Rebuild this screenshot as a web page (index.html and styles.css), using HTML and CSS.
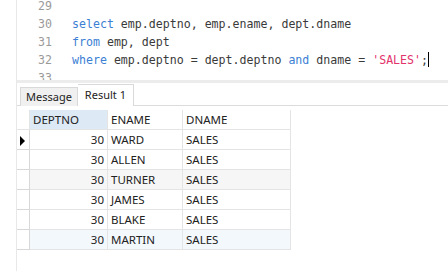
FILE: index.html
```html
<!DOCTYPE html>
<html lang="en">
<head>
    <meta charset="UTF-8">
    <title>Query Result</title>
    <link rel="stylesheet" href="styles.css">
</head>
<body>
    <div class="workspace">
        <div class="editor">
            <div class="lines">
                <div class="line"><span class="num">29</span><span class="code"></span></div>
                <div class="line"><span class="num">30</span><span class="code"><span class="kw">select</span> emp.deptno, emp.ename, dept.dname</span></div>
                <div class="line"><span class="num">31</span><span class="code"><span class="kw">from</span> emp, dept</span></div>
                <div class="line"><span class="num">32</span><span class="code"><span class="kw">where</span> emp.deptno = dept.deptno <span class="kw">and</span> dname = <span class="str">'SALES'</span>;<span class="caret"></span></span></div>
                <div class="line"><span class="num">33</span><span class="code"></span></div>
            </div>
        </div>

        <div class="tabs">
            <div class="tab">Message</div>
            <div class="tab active">Result 1</div>
        </div>

        <table class="grid">
            <thead>
                <tr>
                    <th class="ind"></th>
                    <th class="col-no sorted">DEPTNO</th>
                    <th class="col-name">ENAME</th>
                    <th class="col-dept">DNAME</th>
                </tr>
            </thead>
            <tbody>
                <tr class="current">
                    <td class="ind"><span class="arrow"></span></td>
                    <td class="num-cell">30</td><td>WARD</td><td>SALES</td>
                </tr>
                <tr>
                    <td class="ind"></td>
                    <td class="num-cell">30</td><td>ALLEN</td><td>SALES</td>
                </tr>
                <tr class="alt">
                    <td class="ind"></td>
                    <td class="num-cell">30</td><td>TURNER</td><td>SALES</td>
                </tr>
                <tr>
                    <td class="ind"></td>
                    <td class="num-cell">30</td><td>JAMES</td><td>SALES</td>
                </tr>
                <tr>
                    <td class="ind"></td>
                    <td class="num-cell">30</td><td>BLAKE</td><td>SALES</td>
                </tr>
                <tr class="hover">
                    <td class="ind"></td>
                    <td class="num-cell">30</td><td>MARTIN</td><td>SALES</td>
                </tr>
            </tbody>
        </table>
    </div>
</body>
</html>
```

FILE: styles.css
```css
body {
    margin: 0;
    width: 448px;
    height: 271px;
    overflow: hidden;
    background: #ffffff;
}
.workspace {
    margin-left: 16px;
    height: 271px;
    border-left: 1px solid #e8e8e8;
}
.editor {
    height: 80px;
    overflow: hidden;
    background: #ffffff;
    border-bottom: 3px solid #ececec;
    font-family: "DejaVu Sans Mono", monospace;
    font-size: 11.6px;
}
.lines {
    margin-top: -3px;
}
.line {
    display: flex;
    height: 18px;
    line-height: 18px;
}
.num {
    width: 35px;
    text-align: right;
    color: #9a9a9a;
}
.code {
    margin-left: 20px;
    color: #3a3a3a;
    white-space: pre;
}
.kw {
    color: #3b80d4;
}
.str {
    color: #e2336b;
}
.caret {
    display: inline-block;
    width: 1px;
    height: 15px;
    background: #000;
    vertical-align: -3px;
}
.tabs {
    display: flex;
    align-items: flex-end;
    height: 22px;
    padding-left: 3px;
    border-bottom: 1px solid #dcdcdc;
    font-family: "Noto Sans", sans-serif;
    font-size: 11px;
    color: #222;
}
.tab {
    height: 18px;
    line-height: 18px;
    padding: 0 5px;
    margin-bottom: -1px;
    background: #f0f0f0;
    border: 1px solid #d9d9d9;
    border-bottom: none;
}
.tab.active {
    height: 21px;
    line-height: 20px;
    padding: 0 7px;
    background: #ffffff;
    border-left: none;
}
.grid {
    margin-top: 4px;
    border-collapse: collapse;
    font-family: "Noto Sans", sans-serif;
    font-size: 11.5px;
    color: #222;
}
.grid th,
.grid td {
    height: 19px;
    padding: 0 3px;
    border: 1px solid #e4e4e4;
    text-align: left;
    font-weight: normal;
    white-space: nowrap;
}
.grid th {
    border-top: none;
}
.grid .ind {
    width: 6px;
    padding: 0 3px;
    border-left: none;
    border-color: #d8d8d8;
}
.grid th.ind {
    border-bottom-color: #e4e4e4;
    border-right-color: #e4e4e4;
}
.col-no {
    width: 71px;
}
.col-name {
    width: 68px;
}
.col-dept {
    width: 101px;
}
.grid th.sorted {
    background: #dde9f5;
}
.num-cell {
    text-align: right !important;
}
.grid tr.alt td {
    background: #f6f6f6;
}
.grid tr.hover td {
    background: #f3f8fd;
}
.grid tr.hover td.ind,
.grid tr.alt td.ind {
    background: #ffffff;
}
.arrow {
    display: inline-block;
    width: 0;
    height: 0;
    border-top: 5px solid transparent;
    border-bottom: 5px solid transparent;
    border-left: 5px solid #000;
    vertical-align: middle;
}
```
